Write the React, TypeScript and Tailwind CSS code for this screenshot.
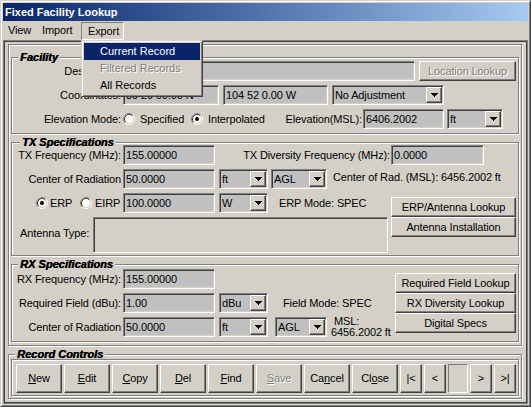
import type { ReactNode } from 'react';

const sunken =
    'border border-t-[#808080] border-l-[#808080] border-b-white border-r-white shadow-[inset_1px_1px_0_#404040,inset_-1px_-1px_0_#d4d0c8]';
const raised =
    'border border-t-white border-l-white border-b-[#404040] border-r-[#404040] shadow-[inset_-1px_-1px_0_#808080]';
const etched = 'border border-[#808080] shadow-[1px_1px_0_#fff,inset_1px_1px_0_#fff]';

function Field({ value, className }: { value?: string; className: string }) {
    return (
        <div className={`${sunken} flex h-[20px] shrink-0 items-center overflow-hidden whitespace-nowrap bg-[#c0c0c0] pl-[2px] ${className}`}>
            {value}
        </div>
    );
}

function Select({ value, className }: { value: string; className: string }) {
    return (
        <div className={`${sunken} flex h-[20px] shrink-0 items-center bg-[#c0c0c0] pl-[2px] pr-[1px] ${className}`}>
            <span className="flex-1 truncate">{value}</span>
            <span className={`${raised} flex h-[16px] w-[16px] items-center justify-center bg-[#d4d0c8]`}>
                <svg width="7" height="4" viewBox="0 0 7 4">
                    <path d="M0 0H7V1H6V2H5V3H4V4H3V3H2V2H1V1H0Z" fill="#000" />
                </svg>
            </span>
        </div>
    );
}

function Btn({ children, className, disabled }: { children: ReactNode; className: string; disabled?: boolean }) {
    return (
        <div
            className={`${raised} flex shrink-0 items-center justify-center whitespace-nowrap bg-[#d4d0c8] ${
                disabled ? 'text-[#808080] [text-shadow:1px_1px_0_#fff]' : 'text-black'
            } ${className}`}
        >
            {children}
        </div>
    );
}

function Radio({ checked }: { checked?: boolean }) {
    return (
        <svg width="12" height="12" viewBox="0 0 12 12" className="shrink-0">
            <circle cx="6" cy="6" r="4.5" fill="#fff" />
            <path d="M2.11 9.89A5.5 5.5 0 0 1 9.89 2.11" stroke="#808080" fill="none" />
            <path d="M9.89 2.11A5.5 5.5 0 0 1 2.11 9.89" stroke="#fff" fill="none" />
            <path d="M2.82 9.18A4.5 4.5 0 0 1 9.18 2.82" stroke="#404040" fill="none" />
            <path d="M9.18 2.82A4.5 4.5 0 0 1 2.82 9.18" stroke="#d4d0c8" fill="none" />
            {checked && <circle cx="6" cy="6" r="2" fill="#000" />}
        </svg>
    );
}

function Label({ children }: { children: ReactNode }) {
    return <span className="w-[111px] shrink-0 whitespace-nowrap pr-[2px] text-right">{children}</span>;
}

function Group({ title, titleCls, className, children }: { title: string; titleCls: string; className: string; children: ReactNode }) {
    return (
        <fieldset className={`${etched} ${className}`}>
            <legend
                className={`h-[14px] bg-[#d4d0c8] px-[2px] text-[11px] font-bold italic leading-[14px] tracking-normal [text-shadow:0.5px_0_0_#000] ${titleCls}`}
            >
                {title}
            </legend>
            {children}
        </fieldset>
    );
}

export default function App() {
    return (
        <div className="relative flex h-[407px] w-[531px] flex-col border border-t-[#d4d0c8] border-l-[#d4d0c8] border-b-[#404040] border-r-[#404040] bg-[#d4d0c8] p-[2px] font-['Liberation_Sans',Arial,sans-serif] text-[11px] tracking-[-0.12px] text-black shadow-[inset_1px_1px_0_#fff,inset_-1px_-1px_0_#808080]">
            {/* title bar */}
            <div className="flex h-[18px] shrink-0 items-center bg-linear-to-r from-[#0a246a] to-[#a6caf0] pl-[2px] font-bold tracking-normal text-white">
                Fixed Facility Lookup
            </div>

            {/* menu bar */}
            <div className="flex h-[19px] shrink-0">
                <span className="flex h-[19px] w-[32px] items-center pl-[5px]">View</span>
                <span className="flex h-[19px] w-[46px] items-center pl-[7px]">Import</span>
                <span className="mt-[1px] flex h-[18px] w-[43px] items-center border border-t-[#808080] border-l-[#808080] border-b-white border-r-white pl-[6px]">
                    Export
                </span>
            </div>

            {/* client area */}
            <div className="flex flex-1 flex-col border border-[#808080] shadow-[inset_1px_1px_0_#404040,inset_-1px_-1px_0_#404040] p-[1px]">
                <div className={`${etched} ml-[3px] mt-[2px] w-[514px] px-[2px] pb-[3px] pt-[5px]`}>
                    {/* Facility */}
                    <Group title="Facility" titleCls="ml-[6px]" className="w-[508px] pb-[4px]">
                        <div className="-mt-[3px] flex h-[20px] items-center">
                            <Label>Description:</Label>
                            <Field value="Test Facility" className="w-[292px]" />
                            <Btn disabled className="ml-[4px] h-[20px] w-[97px]">
                                Location Lookup
                            </Btn>
                        </div>
                        <div className="mt-[4px] flex h-[20px] items-center">
                            <Label>Coordinates:</Label>
                            <Field value="39 29 00.00 N" className="w-[96px]" />
                            <Field value="104 52 0.00 W" className="ml-[4px] w-[105px]" />
                            <Select value="No Adjustment" className="ml-[4px] w-[112px]" />
                        </div>
                        <div className="mt-[4px] flex h-[20px] items-center">
                            <Label>Elevation Mode:</Label>
                            <Radio />
                            <span className="ml-[5px] w-[47px] shrink-0">Specified</span>
                            <span className="ml-[4px] flex">
                                <Radio checked />
                            </span>
                            <span className="ml-[5px] w-[77px] shrink-0">Interpolated</span>
                            <span className="w-[78px] shrink-0 pr-[1px] text-right">Elevation(MSL):</span>
                            <Field value="6406.2002" className="w-[81px]" />
                            <Select value="ft" className="ml-[3px] w-[56px]" />
                        </div>
                    </Group>

                    {/* TX */}
                    <Group title="TX Specifications" titleCls="ml-[8px]" className="mt-[1px] w-[508px] pb-[2px]">
                        <div className="-mt-[4px] flex h-[20px] items-center">
                            <Label>TX Frequency (MHz):</Label>
                            <Field value="155.00000" className="w-[92px]" />
                            <span className="w-[176px] shrink-0 pr-[1px] text-right">TX Diversity Frequency (MHz):</span>
                            <Field value="0.0000" className="w-[93px]" />
                        </div>
                        <div className="mt-[4px] flex h-[20px] items-center">
                            <Label>Center of Radiation</Label>
                            <Field value="50.0000" className="w-[92px]" />
                            <Select value="ft" className="ml-[4px] w-[49px]" />
                            <Select value="AGL" className="ml-[3px] w-[56px]" />
                            <span className="ml-[6px] -mt-[4px] whitespace-nowrap">Center of Rad. (MSL): 6456.2002 ft</span>
                        </div>
                        <div className="mt-[4px] flex">
                            <div className="flex w-[376px] shrink-0 flex-col">
                                <div className="flex h-[20px] items-center">
                                    <span className="ml-[24px] flex">
                                        <Radio checked />
                                    </span>
                                    <span className="ml-[2px] w-[30px] shrink-0">ERP</span>
                                    <Radio />
                                    <span className="ml-[3px] w-[28px] shrink-0">EIRP</span>
                                    <Field value="100.0000" className="w-[92px]" />
                                    <Select value="W" className="ml-[4px] w-[49px]" />
                                    <span className="ml-[11px] whitespace-nowrap">ERP Mode: SPEC</span>
                                </div>
                                <div className="mt-[4px] flex h-[36px]">
                                    <span className="w-[81px] shrink-0 pl-[8px] pt-[8px]">Antenna Type:</span>
                                    <div className={`${sunken} h-[36px] w-[295px] bg-[#d4d0c8]`} />
                                </div>
                            </div>
                            <div className="ml-[3px] flex flex-col pt-[4px]">
                                <Btn className="h-[20px] w-[125px]">ERP/Antenna Lookup</Btn>
                                <Btn className="h-[20px] w-[125px]">Antenna Installation</Btn>
                            </div>
                        </div>
                    </Group>

                    {/* RX */}
                    <Group title="RX Specifications" titleCls="ml-[6px]" className="mt-[1px] w-[508px] pb-[4px]">
                        <div className="-mt-[2px] flex">
                            <div className="flex w-[380px] shrink-0 flex-col">
                                <div className="flex h-[20px] items-center">
                                    <Label>RX Frequency (MHz):</Label>
                                    <Field value="155.00000" className="w-[92px]" />
                                </div>
                                <div className="mt-[4px] flex h-[20px] items-center">
                                    <Label>Required Field (dBu):</Label>
                                    <Field value="1.00" className="w-[92px]" />
                                    <Select value="dBu" className="ml-[4px] w-[49px]" />
                                    <span className="ml-[15px] whitespace-nowrap">Field Mode: SPEC</span>
                                </div>
                                <div className="mt-[4px] flex h-[20px] items-center">
                                    <Label>Center of Radiation</Label>
                                    <Field value="50.0000" className="w-[92px]" />
                                    <Select value="ft" className="ml-[4px] w-[49px]" />
                                    <Select value="AGL" className="ml-[7px] w-[52px]" />
                                    <span className="ml-[4px] flex flex-col whitespace-nowrap leading-[11px]">
                                        <span className="pl-[3px]">MSL:</span>
                                        <span>6456.2002 ft</span>
                                    </span>
                                </div>
                            </div>
                            <div className="ml-[3px] flex flex-col pt-[4px]">
                                <Btn className="h-[20px] w-[121px]">Required Field Lookup</Btn>
                                <Btn className="h-[20px] w-[121px]">RX Diversity Lookup</Btn>
                                <Btn className="h-[20px] w-[121px]">Digital Specs</Btn>
                            </div>
                        </div>
                    </Group>
                </div>

                {/* Record controls */}
                <Group title="Record Controls" titleCls="ml-[6px]" className="ml-[3px] mt-[1px] w-[514px] pb-[2px]">
                    <div className={`${etched} -mt-[2px] ml-[2px] flex w-[508px] gap-[2px] pb-[2px] pl-[4px] pt-[4px]`}>
                        <Btn className="h-[29px] w-[46px]">
                            <u>N</u>ew
                        </Btn>
                        <Btn className="h-[29px] w-[46px]">
                            <u>E</u>dit
                        </Btn>
                        <Btn className="h-[29px] w-[46px]">
                            <u>C</u>opy
                        </Btn>
                        <Btn className="h-[29px] w-[46px]">
                            <u>D</u>el
                        </Btn>
                        <Btn className="h-[29px] w-[46px]">
                            <u>F</u>ind
                        </Btn>
                        <Btn disabled className="h-[29px] w-[46px]">
                            <u>S</u>ave
                        </Btn>
                        <Btn className="h-[29px] w-[46px]">
                            Ca<u>n</u>cel
                        </Btn>
                        <Btn className="h-[29px] w-[46px]">
                            Cl<u>o</u>se
                        </Btn>
                        <Btn className="h-[29px] w-[22px]">|&lt;</Btn>
                        <Btn className="h-[29px] w-[22px]">&lt;</Btn>
                        <div className="h-[29px] w-[20px] shrink-0 border border-t-[#808080] border-l-[#808080] border-b-white border-r-white" />
                        <Btn className="h-[29px] w-[22px]">&gt;</Btn>
                        <Btn className="h-[29px] w-[22px]">&gt;|</Btn>
                    </div>
                </Group>
            </div>

            {/* open Export menu */}
            <div className="absolute left-[80px] top-[39px] h-[57px] w-[122px] border border-t-[#d4d0c8] border-l-[#d4d0c8] border-b-[#404040] border-r-[#404040] bg-[#d4d0c8] p-[2px] tracking-normal shadow-[inset_1px_1px_0_#fff,inset_-1px_-1px_0_#808080]">
                <div className="flex h-[17px] items-center bg-[#0a246a] pl-[16px] text-white">Current Record</div>
                <div className="flex h-[17px] items-center pl-[16px] text-[#808080] [text-shadow:1px_1px_0_#fff]">Filtered Records</div>
                <div className="flex h-[17px] items-center pl-[16px]">All Records</div>
            </div>
        </div>
    );
}
